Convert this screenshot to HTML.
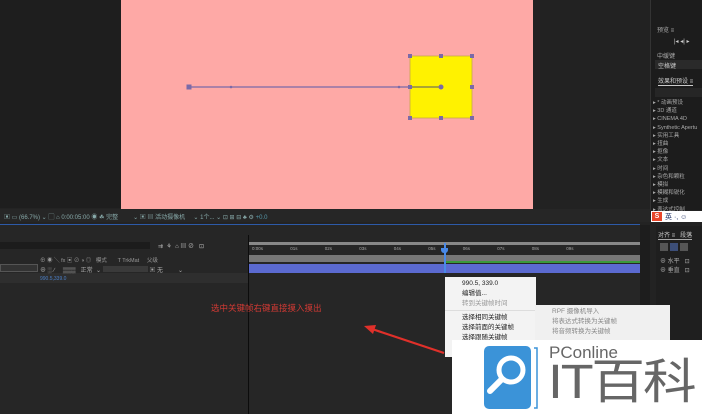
<!DOCTYPE html>
<html><head><meta charset="utf-8"><style>
*{margin:0;padding:0;box-sizing:border-box}
body{width:702px;height:414px;overflow:hidden;background:#232323;position:relative;font-family:"Liberation Sans","Noto Sans CJK SC",sans-serif;color:#aaa}
.a{position:absolute}
.t{font-size:6px;white-space:nowrap}
.menu div{font-size:6.5px;color:#222;height:10px;line-height:10px;padding-left:17px;white-space:nowrap}
</style></head><body>
<div class="a" style="left:0;top:0;width:121px;height:208px;background:#1e1e1e"></div>
<div class="a" style="left:121px;top:0;width:412px;height:209px;background:#fea9a6"></div>
<div class="a" style="left:533px;top:0;width:117px;height:209px;background:#222"></div>
<div class="a" style="left:650px;top:0;width:52px;height:210px;background:#1c1c1c;border-left:1px solid #333"></div>
<svg class="a" style="left:121px;top:0" width="412" height="209">
<line x1="68" y1="87" x2="320" y2="87" stroke="#7a6aa8" stroke-width="1.2"/>
<rect x="289" y="56" width="62" height="62" fill="#fff200" stroke="#c9a84a" stroke-width="0.8"/>
<line x1="289" y1="87" x2="320" y2="87" stroke="#556" stroke-width="1"/>
<g fill="#7a6aa8"><rect x="65.5" y="84.5" width="5" height="5"/><rect x="287" y="54" width="4" height="4"/><rect x="318" y="54" width="4" height="4"/><rect x="349" y="54" width="4" height="4"/><rect x="287" y="85" width="4" height="4"/><rect x="349" y="85" width="4" height="4"/><rect x="287" y="116" width="4" height="4"/><rect x="318" y="116" width="4" height="4"/><rect x="349" y="116" width="4" height="4"/><circle cx="320" cy="87" r="2.5"/><circle cx="110" cy="87" r="1.3"/><circle cx="278" cy="87" r="1.3"/></g>
</svg>
<div class="a t" style="left:657px;top:25px">预览 ≡</div>
<div class="a t" style="left:674px;top:38px;color:#ccc">|◂ ◂| ▸</div>
<div class="a t" style="left:657px;top:51px">中缓键</div>
<div class="a" style="left:655px;top:60px;width:47px;height:9px;background:#2a2a2a"></div>
<div class="a t" style="left:658px;top:61px;color:#ccc">空格键</div>
<div class="a t" style="left:658px;top:76px;color:#ccc;border-bottom:1px solid #ccc">效果和预设 ≡</div>
<div class="a" style="left:655px;top:88px;width:47px;height:9px;background:#262626"></div>
<div class="a" style="left:653px;top:99px;font-size:5.5px;line-height:8.2px;color:#aaa;white-space:nowrap">▸ * 动画预设<br>▸ 3D 通道<br>▸ CINEMA 4D<br>▸ Synthetic Apertu<br>▸ 实用工具<br>▸ 扭曲<br>▸ 抠像<br>▸ 文本<br>▸ 时间<br>▸ 杂色和颗粒<br>▸ 模拟<br>▸ 模糊和锐化<br>▸ 生成<br>▸ 表达式控制</div>
<div class="a" style="left:0;top:209px;width:650px;height:13px;background:#262626"></div>
<div class="a t" style="left:4px;top:212px;color:#8aa">▣ ▭ (66.7%) ⌄ ▢ ⌂ 0:00:05:00 ◉ ☘ 完整 &nbsp; &nbsp; &nbsp; &nbsp; ⌄ ▣ ▤ 活动摄像机 &nbsp; &nbsp; ⌄ 1个... ⌄ ⊡ ⊞ ⊟ ♣ ⚙ <span style="color:#59a">+0.0</span></div>
<div class="a" style="left:651px;top:211px;width:51px;height:11px;background:#fff"></div>
<div class="a" style="left:652px;top:212px;width:10px;height:9px;background:#e8462a;color:#fff;font-size:7px;font-weight:bold;text-align:center;line-height:9px">S</div>
<div class="a t" style="left:665px;top:212px;color:#236;font-size:7px">英 ·, ☺</div>
<div class="a" style="left:0;top:224px;width:640px;height:1px;background:#2d5aa8"></div>
<div class="a" style="left:0;top:225px;width:640px;height:189px;background:#262626"></div>
<div class="a" style="left:0;top:242px;width:150px;height:7px;background:#1c1c1c"></div>
<div class="a t" style="left:158px;top:241px;color:#bbb">⇉ &nbsp;⚘ &nbsp;⌂ ▤ ⊘ &nbsp; ⊡</div>
<div class="a t" style="left:40px;top:256px;color:#999;font-size:5.5px">⊕ ◉ ╲ fx ▣ ⊘ ◑ ◎ &nbsp; 模式 &nbsp; &nbsp; &nbsp; T TrkMat &nbsp; &nbsp; 父级</div>
<div class="a" style="left:0;top:264px;width:38px;height:8px;background:#333;border:1px solid #555"></div>
<div class="a" style="left:0;top:273px;width:248px;height:10px;background:#2e2e2e"></div>
<div class="a t" style="left:40px;top:265px;color:#aaa">⊕ ░ ∕ &nbsp; &nbsp; ▒▒▒ &nbsp; 正常 &nbsp;⌄ <span style="display:inline-block;width:45px;height:6px;background:#3a3a3a"></span> ▣ 无 &nbsp; &nbsp; &nbsp; &nbsp; ⌄</div>
<div class="a t" style="left:40px;top:276px;color:#4a7fc8;font-size:5px">990.5,339.0</div>
<div class="a" style="left:248px;top:235px;width:1px;height:179px;background:#0c0c0c"></div>
<div class="a" style="left:249px;top:242px;width:392px;height:3px;background:#888"></div>
<div class="a t" style="left:252px;top:246px;color:#aaa;font-size:4.5px;word-spacing:26px">0:00s 01s 02s 03s 04s 05s 06s 07s 08s 09s</div>
<div class="a" style="left:249px;top:255px;width:392px;height:7px;background:#777"></div>
<div class="a" style="left:445px;top:261px;width:195px;height:2px;background:#3a9a3a"></div>
<div class="a" style="left:249px;top:264px;width:391px;height:9px;background:#5b6ad0"></div>
<div class="a" style="left:444px;top:243px;width:2px;height:30px;background:#4a8ae8"></div>
<div class="a" style="left:441px;top:248px;width:7px;height:5px;background:#4a8ae8;border-radius:0 0 3px 3px"></div>
<div class="a" style="left:640px;top:225px;width:10px;height:189px;background:#1d1d1d"></div>
<div class="a" style="left:656px;top:226px;width:46px;height:188px;background:#1f1f1f"></div>
<div class="a t" style="left:658px;top:230px;color:#ccc;border-bottom:1px solid #aaa">对齐 ≡ &nbsp; 段落</div>
<div class="a" style="left:660px;top:243px;width:8px;height:8px;background:#555"></div>
<div class="a" style="left:670px;top:243px;width:8px;height:8px;background:#3c4e78"></div>
<div class="a" style="left:680px;top:243px;width:8px;height:8px;background:#555"></div>
<div class="a t" style="left:660px;top:256px;color:#aaa">⊕ 水平 &nbsp; ⊡<br>⊕ 垂直 &nbsp; ⊡</div>
<div class="a" style="left:211px;top:302px;font-size:8.5px;color:#d43a34;white-space:nowrap">选中关键帧右键直接摸入摸出</div>
<svg class="a" style="left:360px;top:320px" width="90" height="40"><line x1="84" y1="33" x2="12" y2="9" stroke="#e0302a" stroke-width="2.2"/><polygon points="4,6 16,5 13,14" fill="#e0302a"/></svg>
<div class="a menu" style="left:445px;top:277px;width:91px;height:80px;background:#f3f3f3;padding-top:2px">
<div>990.5, 339.0</div><div>编辑值...</div><div style="color:#999">转到关键帧时间</div>
<div style="height:1px;background:#ddd;margin:1px 0 2px"></div>
<div>选择相同关键帧</div><div>选择前面的关键帧</div><div>选择跟随关键帧</div></div>
<div class="a menu" style="left:535px;top:305px;width:135px;height:40px;background:#f0f0f0;padding-top:2px">
<div style="color:#888">RPF 摄像机导入</div><div style="color:#888">将表达式转换为关键帧</div><div style="color:#888">将音频转换为关键帧</div></div>
<div class="a" style="left:452px;top:340px;width:250px;height:74px;background:#fff"></div>
<svg class="a" style="left:484px;top:346px" width="60" height="66">
<rect x="0" y="0" width="47" height="63" rx="5" fill="#3b93d8"/>
<path d="M50 2h3v60h-3" fill="none" stroke="#3b93d8" stroke-width="1.5"/>
<circle cx="27" cy="24" r="12" fill="none" stroke="#fff" stroke-width="5"/>
<line x1="17" y1="34" x2="6" y2="45" stroke="#fff" stroke-width="6" stroke-linecap="round"/>
</svg>
<div class="a" style="left:549px;top:343px;font-size:17px;color:#666;white-space:nowrap">PConline</div>
<div class="a" style="left:548px;top:358px;font-size:48px;line-height:50px;color:#666;letter-spacing:-2px;white-space:nowrap;transform:scaleX(1.12);transform-origin:left">IT百科</div>
</body></html>
